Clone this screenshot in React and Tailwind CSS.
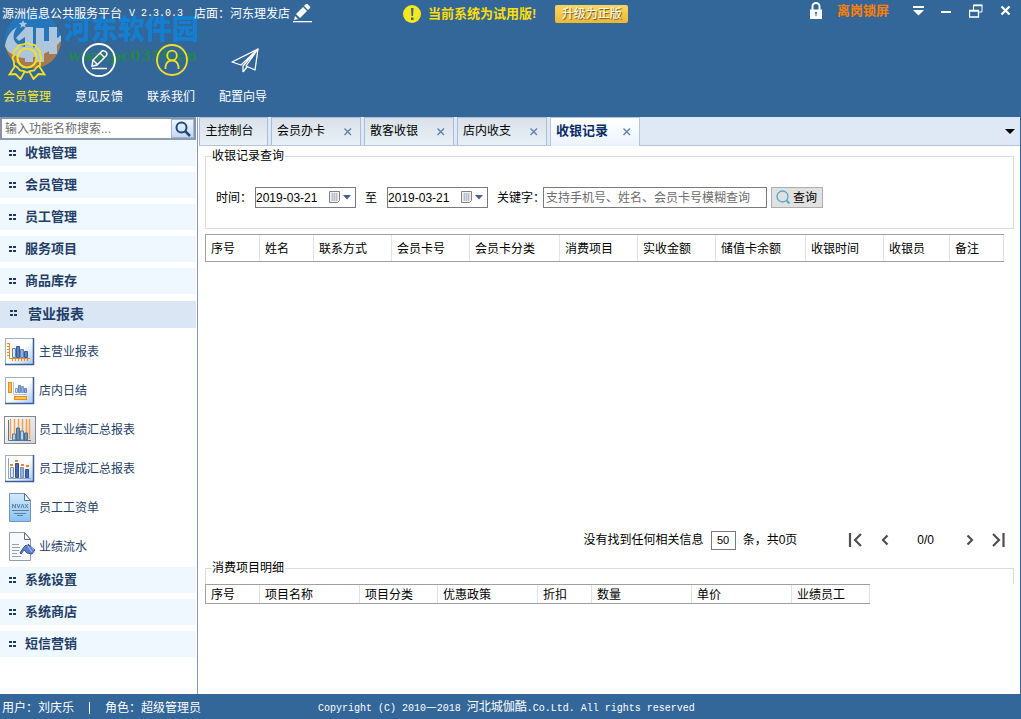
import React from "react";

const menuTop = ["收银管理", "会员管理", "员工管理", "服务项目", "商品库存"];
const menuBottom = ["系统设置", "系统商店", "短信营销"];

function Dots() {
  return (
    <svg width="8" height="7" viewBox="0 0 8 7" fill="#1f3a60" aria-hidden="true">
      <path d="M0 0h3v2H0zM4 0h3v2H4zM0 4h3v2H0zM4 4h3v2H4z" />
    </svg>
  );
}

function Frame({ children, dark }) {
  return (
    <svg width="32" height="30" viewBox="0 0 32 30" aria-hidden="true">
      <defs>
        <linearGradient id="tile" x1="0" y1="0" x2="1" y2="1">
          <stop offset="0.5" stopColor="#fff" />
          <stop offset="1" stopColor="#a4c6ff" />
        </linearGradient>
        <linearGradient id="tileGray" x1="0" y1="0" x2="1" y2="1">
          <stop offset="0" stopColor="#fff" />
          <stop offset="1" stopColor="#cfd4da" />
        </linearGradient>
        <linearGradient id="bar" x1="0" y1="0" x2="1" y2="0">
          <stop offset="0" stopColor="#e4eefb" />
          <stop offset="1" stopColor="#8ba6cf" />
        </linearGradient>
      </defs>
      {dark ? (
        <rect x="0.5" y="1.5" width="31" height="27" fill="url(#tileGray)" stroke="#85878c" />
      ) : (
        <>
          <rect x="1.5" y="1.5" width="28" height="26" fill="url(#tile)" stroke="#a3afc4" />
          <path d="M1 27.500H29.500V1" fill="none" stroke="#3d5c94" strokeWidth="1.500" />
        </>
      )}
      {children}
    </svg>
  );
}

function MainReport() {
  return (
    <Frame>
      <path d="M5.500 6V21.500H26" fill="none" stroke="#f28a1c" />
      <path d="M3 6.500h3M3 9.500h3M3 12.500h3M3 15.500h3M3 18.500h3M8.500 22v2M11.500 22v2M14.500 22v2M17.500 22v2M20.500 22v2M23.500 22v2" stroke="#f28a1c" />
      <path d="M8.500 20.500v-9h3v9zM16.500 20.500v-8h3v8z" fill="url(#bar)" stroke="#6480ae" />
      <path d="M12.500 20.500v-11h3v11zM20.500 20.500v-6h3v6z" fill="#5f80c4" stroke="#3b5a98" />
    </Frame>
  );
}
function DayReport() {
  return (
    <Frame>
      <rect x="4.500" y="6.500" width="3" height="10" fill="#ffc34d" stroke="#ee8a16" />
      <rect x="10.500" y="20.500" width="12" height="3" fill="#ffc34d" stroke="#ee8a16" />
      <path d="M9.500 6V18.500H23" fill="none" stroke="#b8c6dc" />
      <path d="M11.500 16.500v-4h2v4zM17.500 16.500v-6h2v6z" fill="url(#bar)" stroke="#7f9cc8" />
      <path d="M14.500 16.500v-7h2v7zM20.500 16.500v-4h2v4z" fill="#8fabdb" stroke="#6585bd" />
    </Frame>
  );
}
function StaffReport() {
  return (
    <Frame dark>
      <path d="M6.500 4v20M10.500 4v20M14.500 4v20M18.500 4v20M22.500 4v20M25.500 4v20" stroke="#f6a04c" strokeWidth="1.500" />
      <path d="M4.500 5V25.500H27" fill="none" stroke="#53759a" />
      <path d="M8.500 25v-6h3v6zM16.500 25v-9h3v9z" fill="#bcd2e4" stroke="#5b7d9e" />
      <path d="M12.500 25v-12h3v12zM20.500 25v-7h3v7z" fill="#6d8fad" stroke="#4b6e90" />
    </Frame>
  );
}
function BonusReport() {
  return (
    <Frame>
      <path d="M4.500 4V24.500H27" fill="none" stroke="#8da2c6" />
      <path d="M6.500 23.500v-10h3v10zM16.500 23.500v-10h3v10z" fill="url(#bar)" stroke="#7690bd" />
      <path d="M11.500 23.500v-14h3v14zM21.500 23.500v-8h3v8z" fill="#4668b0" stroke="#31508c" />
      <path d="M6 10h3v2H6zM11 6h3v2h-3zM17 10h3v2h-3zM22 11h3v2h-3z" fill="#f5841f" />
    </Frame>
  );
}
function PaySheet() {
  return (
    <svg width="32" height="30" viewBox="0 0 32 30" aria-hidden="true">
      <defs>
        <linearGradient id="sheet" x1="0" y1="0" x2="0" y2="1">
          <stop offset="0" stopColor="#d3ebfc" />
          <stop offset="1" stopColor="#86c2f4" />
        </linearGradient>
      </defs>
      <path d="M5.500 0.500h15l6 7v21h-21z" fill="url(#sheet)" stroke="#7795b8" />
      <path d="M20.500 0.500v7h6z" fill="#f5faff" stroke="#54708f" />
      <path d="M8.500 15v-4l3 4v-4M13 11l1.500 4 1.500-4M17 15l1.500-4 1.500 4M21 11l3 4M24 11l-3 4" stroke="#64819f" fill="none" />
      <path d="M8 17.500h17M10 20.500h12M13 22.500h6" stroke="#5f7f9f" />
    </svg>
  );
}
function FlowSheet() {
  return (
    <svg width="32" height="30" viewBox="0 0 32 30" aria-hidden="true">
      <path d="M5.500 0.500h15l6 7v21h-21z" fill="#f7f9fc" stroke="#8d9db5" />
      <path d="M20.500 0.500v7h6z" fill="#fff" stroke="#5c6f8c" />
      <path d="M8 12.500h7M8 15.500h8M8 18.500h7M8 21.500h5M8 24.500h9" stroke="#95a2b6" />
      <path d="M16 21q4-7 6-8l3 2-1-3 7 6-3 4-5-1-3-3-3 4z" fill="#5c80c8" stroke="#39589b" />
      <path d="M24 14l4 6M27 14l3 4" stroke="#b9ccf2" />
    </svg>
  );
}

const reports = [
  ["主营业报表", MainReport],
  ["店内日结", DayReport],
  ["员工业绩汇总报表", StaffReport],
  ["员工提成汇总报表", BonusReport],
  ["员工工资单", PaySheet],
  ["业绩流水", FlowSheet],
];

function Watermark() {
  return (
    <div className="pointer-events-none absolute top-3 left-1 flex select-none" aria-hidden="true">
      <svg width="60" height="58" viewBox="0 0 60 58">
        <circle cx="29" cy="28" r="28" fill="#2475ba" />
        <path d="M1 32C12 46 38 44 57 26C58 42 46 56 30 56C14 56 3 46 1 32z" fill="#a8794c" />
        <path d="M1 34C2 26 6 19 13 15C7 24 9 31 17 34C30 38 46 33 57 23v6C47 40 33 47 19 46C9 44 3 40 1 34z" fill="#aec5de" />
        <path d="M12 26L22 15h7v35h-8V25l-6 4z" fill="#aec5de" />
        <path d="M32 16h8v13h5V15h8v27h-8v-6h-5v14h-8z" fill="#aec5de" />
        <path d="M19 8l1.200 2.800 3 .2-2.300 2 .8 3-2.700-1.700-2.700 1.700.8-3-2.300-2 3-.2z" fill="#aec5de" />
      </svg>
      <div className="pt-1.5 whitespace-nowrap">
        <div className="text-[27px] leading-6 font-black text-[#147ed0]">河东软件园</div>
        <div className="pt-1 pl-1 font-['DejaVu_Serif',serif] text-[15px] leading-5 font-bold text-[#25854f]">www.pc0359.cn</div>
      </div>
    </div>
  );
}

function Medal() {
  return (
    <svg width="40" height="40" viewBox="0 0 40 40" fill="none" stroke="#f2df26" strokeWidth="1.800" aria-hidden="true">
      <path d="M20 3l4 1.500 4 .5 2 3.500 3 2.500 0 4 1.500 3-1.500 4 0 3-3.500 2.500-2.500 3-4 .5-3 1.500-3-1.500-4-.5-2.500-3-3.500-2.500 0-3-1.500-4 1.500-3 0-4 3-2.500 2-3.500 4-.5z" />
      <circle cx="20" cy="18" r="9.500" strokeWidth="2.200" />
      <path d="M8 26L2.500 34.500l6-.5 5 5 4.500-8M32 26l5.500 8.500-6-.5-5 5-4.500-8" />
    </svg>
  );
}
function Feedback() {
  return (
    <svg width="40" height="40" viewBox="0 0 40 40" fill="none" stroke="#fff" strokeWidth="1.800" aria-hidden="true">
      <circle cx="20" cy="20" r="16" />
      <path d="M13 26l1-6 9-9q2-1 4 1t0 4l-9 9zM14 20l4 4M21 13l4 4M13 28.500h15" strokeWidth="1.500" />
    </svg>
  );
}
function Contact() {
  return (
    <svg width="40" height="40" viewBox="0 0 40 40" fill="none" stroke="#f2df26" strokeWidth="1.800" aria-hidden="true">
      <circle cx="21" cy="20" r="15" />
      <circle cx="21" cy="15.500" r="4.800" />
      <path d="M14.500 29v-2.500q1-6 6.500-6t6.500 6V29" />
    </svg>
  );
}
function Plane() {
  return (
    <svg width="40" height="40" viewBox="0 0 40 40" fill="none" stroke="#fff" strokeWidth="1.300" strokeLinejoin="round" aria-hidden="true">
      <path d="M35 9L9 22l9 3zM35 9L32 30l-9-4zM35 9L20 26v6M20 32l4-5" />
    </svg>
  );
}

const tools = [
  ["会员管理", Medal, "text-[#fbe829]"],
  ["意见反馈", Feedback, "text-white"],
  ["联系我们", Contact, "text-white"],
  ["配置向导", Plane, "text-white"],
];

function Header() {
  return (
    <header className="relative h-[117px] shrink-0 bg-[#336699] text-white">
      <Watermark />
      <div className="relative flex h-7 items-center">
        <div className="flex w-[402px] shrink-0 items-center">
          <h1 className="pl-0.5">源洲信息公共服务平台</h1>
          <span className="pl-[7px] font-['Liberation_Mono','Noto_Sans_CJK_SC',monospace] text-[10px]">V 2.3.0.3</span>
          <span className="pl-[11px]">店面：河东理发店</span>
          <button aria-label="编辑店面" className="ml-[3px]">
            <svg width="20" height="20" viewBox="0 0 20 20" fill="#fff">
              <path d="M1 16l1-4 3 3zM3 10l7-7 4 4-7 7zM11 2l2-2q1-.5 2 .5l2 2q.5 1 0 1.500l-2 2z" />
              <path d="M0 17h19v1.300H0z" />
            </svg>
          </button>
        </div>
        <svg width="20" height="20" viewBox="0 0 20 20" aria-hidden="true">
          <circle cx="10" cy="10" r="9" fill="#f6e71f" />
          <path d="M9 4h2.500l-.5 8H9.500zM9 13.500h2.500V16H9z" fill="#36648c" />
        </svg>
        <strong className="pl-1.5 text-[13px] text-[#ffde00]">当前系统为试用版!</strong>
        <button className="ml-[19px] h-[18px] w-[73px] shrink-0 rounded-xs bg-linear-to-b from-[#fbd75e] to-[#ecb832] text-xs leading-[18px] text-white [text-shadow:1px_1px_1px_#5f4a10]">升级为正版</button>
        <div className="ml-auto flex h-5 items-center self-start pt-px pr-[9px]">
          <svg width="14" height="18" viewBox="0 0 14 18" aria-hidden="true">
            <path d="M3.500 8V4.500a3.500 3.500 0 017 0V8" fill="none" stroke="#fff" strokeWidth="2" />
            <path d="M1 7.500h12V17H1z" fill="#fff" />
            <path d="M6 10h2v1.500H7.500V14h-1v-2.500H6z" fill="#336699" />
          </svg>
          <button className="ml-3.5 text-[13px] font-bold text-[#ff8000]">离岗锁屏</button>
          <button aria-label="菜单" className="ml-6">
            <svg width="11" height="10" viewBox="0 0 11 10" fill="#fff"><path d="M0 0h11v2H0zM0 4h11L5.500 9.500z" /></svg>
          </button>
          <button aria-label="最小化" className="ml-[17px]">
            <svg width="11" height="10" viewBox="0 0 11 10"><path d="M0 5h10v2H0z" fill="#fff" /></svg>
          </button>
          <button aria-label="还原" className="ml-[17px]">
            <svg width="14" height="14" viewBox="0 0 14 14" fill="none" stroke="#fff">
              <path d="M4.500 6V1h8.500v7H9.500" /><path d="M4 1.500h9.500M.500 6.500h9v6.500H.500zM0 7h10" strokeWidth="1.300" />
            </svg>
          </button>
          <button aria-label="关闭" className="ml-[17px]">
            <svg width="12" height="12" viewBox="0 0 12 12" stroke="#fff" strokeWidth="2.200"><path d="M1.500 1.500l8 8M9.500 1.500l-8 8" /></svg>
          </button>
        </div>
      </div>
      <nav className="relative flex pt-3">
        {tools.map(([label, Icon, color]) => (
          <a key={label} href="#" className={"flex w-[72px] flex-col items-start " + color}>
            <span className="pl-[7px]"><Icon /></span>
            <span className="pt-[9px] pl-[3px]">{label}</span>
          </a>
        ))}
      </nav>
    </header>
  );
}

function MenuItem({ label }) {
  return (
    <a href="#" className="flex h-[26px] items-center gap-2 bg-[#eff7ff] pl-[9px] text-[13px] font-bold text-[#1f3f69]">
      <Dots />
      {label}
    </a>
  );
}

function Sidebar() {
  return (
    <aside className="flex w-[198px] shrink-0 flex-col border-r border-[#8798b5] bg-white">
      <div className="flex h-[23px] w-[196px] shrink-0 border-2 border-[#8494ab] border-b-[#8c9cb2] bg-white">
        <input aria-label="搜索功能" placeholder="输入功能名称搜索..." className="min-w-0 flex-1 pl-[3px] outline-none placeholder:text-[#6d6d6d]" />
        <button aria-label="搜索" className="flex w-[23px] items-center justify-center border border-[#9eb6d4] bg-linear-to-b from-[#eef5fd] to-[#c6d9ef]">
          <svg width="16" height="16" viewBox="0 0 16 16" fill="none" stroke="#1d4983">
            <circle cx="6.500" cy="6.500" r="5" strokeWidth="2" /><path d="M10 10l5 5" strokeWidth="2.500" />
          </svg>
        </button>
      </div>
      <nav className="w-[196px]">
        <div className="flex flex-col gap-1.5">{menuTop.map((m) => <MenuItem key={m} label={m} />)}</div>
        <a href="#" className="mt-[7px] flex h-[27px] items-center gap-2.5 bg-[#dbe6f4] pb-0.5 pl-2.5 text-[14px] font-bold text-[#1f3f69]">
          <Dots />
          营业报表
        </a>
        <div className="pt-1">
          {reports.map(([label, Icon]) => (
            <a key={label} href="#" className="flex h-[39px] items-center gap-[3px] pl-1 text-[#1f3f69]">
              <Icon />
              {label}
            </a>
          ))}
        </div>
        <div className="flex flex-col gap-1.5 pt-px">{menuBottom.map((m) => <MenuItem key={m} label={m} />)}</div>
      </nav>
    </aside>
  );
}

function CloseX() {
  return (
    <svg width="8" height="8" viewBox="0 0 8 8" stroke="#5b80ad" strokeWidth="1.400" aria-hidden="true"><path d="M.5 .5l6.500 6.500M7 .5L.5 7" /></svg>
  );
}

function Tabs() {
  return (
    <div className="flex h-[29px] shrink-0 items-stretch gap-[3px] border-b border-[#b3c6e0] bg-[#dfe9f6]">
      <button className="w-[69px] border border-b-0 border-[#a9bcd8] bg-linear-to-b from-[#dae1e8] to-[#e9f1f8] pr-2 pb-0.5 text-black">主控制台</button>
      {["会员办卡", "散客收银", "店内收支"].map((t) => (
        <div key={t} className="flex w-[90px] items-center justify-between border border-b-0 border-[#a9bcd8] bg-linear-to-b from-[#dae1e8] to-[#e9f1f8] pr-2 pl-[5px]">
          <button className="pb-0.5">{t}</button>
          <button aria-label={"关闭" + t}><CloseX /></button>
        </div>
      ))}
      <div className="-mb-px flex w-[90px] items-center justify-between border border-b-0 border-[#b3c6e0] bg-linear-to-b from-white to-[#ebf3fe] pr-2 pl-[5px]">
        <button className="pb-0.5 text-[13px] font-bold text-[#0b2c66]">收银记录</button>
        <button aria-label="关闭收银记录"><CloseX /></button>
      </div>
      <button aria-label="更多标签" className="ml-auto pr-[5px]">
        <svg width="10" height="5" viewBox="0 0 10 5"><path d="M0 0h10L5 5z" /></svg>
      </button>
    </div>
  );
}

function DateBox({ id, label }) {
  return (
    <div className="flex h-[21px] w-[101px] items-center border border-[#7a7a7a] bg-white">
      <input id={id} aria-label={label} defaultValue="2019-03-21" className="w-[73px] outline-none" />
      <button aria-label={"选择" + label} className="flex items-center gap-0.5">
        <svg width="12" height="13" viewBox="0 0 12 13">
          <path d="M.5 .5h10v9l-2 2h-8z" fill="#f2f1ef" stroke="#8a7f7c" />
          <path d="M2 3h7M2 5h7M2 7h7M2 9h7M3.500 2v8M5.500 2v8M7.500 2v8" stroke="#a9b3c6" strokeWidth=".7" />
        </svg>
        <svg width="8" height="5" viewBox="0 0 8 5"><path d="M0 0h8L4 4.500z" fill="#44618f" /></svg>
      </button>
    </div>
  );
}

function PageIcon({ d, label }) {
  return (
    <button aria-label={label}>
      <svg width="16" height="16" viewBox="0 0 16 16" fill="none" stroke="#505050" strokeWidth="2.200"><path d={d} /></svg>
    </button>
  );
}

const recordCols = [
  ["序号", "w-[54px]"], ["姓名", "w-[54px]"], ["联系方式", "w-[78px]"], ["会员卡号", "w-[78px]"],
  ["会员卡分类", "w-[90px]"], ["消费项目", "w-[78px]"], ["实收金额", "w-[78px]"], ["储值卡余额", "w-[90px]"],
  ["收银时间", "w-[78px]"], ["收银员", "w-[66px]"], ["备注", "w-[54px]"],
];
const detailCols = [
  ["序号", "w-[54px]"], ["项目名称", "w-[100px]"], ["项目分类", "w-[78px]"], ["优惠政策", "w-[100px]"],
  ["折扣", "w-[54px]"], ["数量", "w-[100px]"], ["单价", "w-[100px]"], ["业绩员工", "w-[78px]"],
];

function HeadTable({ cols, row, label }) {
  return (
    <table aria-label={label} className="table-fixed border-separate border-spacing-0 self-start border border-r-0 border-[#a0a0a0]">
      <thead>
        <tr className={row}>
          {cols.map(([c, w]) => (
            <th key={c} scope="col" className={"border-r border-[#e2e2e2] p-0 pt-px pl-[5px] text-left font-normal whitespace-nowrap " + w}>{c}</th>
          ))}
        </tr>
      </thead>
    </table>
  );
}

function Content() {
  return (
    <main className="flex min-w-0 flex-1 flex-col border-r border-[#336699] bg-white pl-px">
      <Tabs />
      <div className="flex flex-1 flex-col pt-0.5 pr-1.5 pl-1.5">
        <fieldset className="h-[81px] border border-[#dcdcdc] px-1.5">
          <legend className="pr-px leading-4">收银记录查询</legend>
          <form className="flex items-center pt-[23px] pl-1">
            <label htmlFor="from">时间：</label>
            <span className="ml-[3px]"><DateBox id="from" label="开始日期" /></span>
            <label htmlFor="to" className="mr-2.5 ml-[9px]">至</label>
            <DateBox id="to" label="结束日期" />
            <label htmlFor="keyword" className="ml-[9px] w-[46px] whitespace-nowrap">关键字：</label>
            <input id="keyword" placeholder="支持手机号、姓名、会员卡号模糊查询" className="h-[21px] w-[224px] border border-[#7a7a7a] pl-0.5 outline-none placeholder:text-[#6d6d6d]" />
            <button type="button" className="ml-1 flex h-[21px] w-[52px] items-center gap-0.5 border border-[#adadad] bg-[#e1e1e1] pl-1">
              <svg width="15" height="15" viewBox="0 0 15 15" fill="none" stroke="#4ea9d2">
                <circle cx="6.500" cy="6.500" r="5.500" strokeWidth="1.300" /><path d="M10.500 10.500l3 3" strokeWidth="1.800" />
              </svg>
              查询
            </button>
          </form>
        </fieldset>
        <div className="mt-[5px] flex flex-1 flex-col">
          <HeadTable cols={recordCols} row="h-[26px]" label="收银记录" />
        </div>
        <div className="flex h-10 items-center justify-end pr-2">
          <span>没有找到任何相关信息</span>
          <input aria-label="每页条数" defaultValue="50" className="mx-[7px] h-[19px] w-[25px] border border-[#7a7a7a] text-center text-[11px] outline-none" />
          <span>条，共0页</span>
          <div className="ml-[50px] flex items-center">
            <PageIcon label="首页" d="M3 1v14M14 2L8 8l6 6" />
            <span className="ml-3.5 flex"><PageIcon label="上一页" d="M10.500 3.500L6 8l4.500 4.500" /></span>
            <span className="mr-7 ml-6">0/0</span>
            <span className="mr-3 flex"><PageIcon label="下一页" d="M5.500 3.500L10 8l-4.500 4.500" /></span>
            <PageIcon label="末页" d="M13.500 1v14M3 2l6 6-6 6" />
          </div>
        </div>
        <fieldset className="h-6 border border-b-0 border-[#dcdcdc] px-1.5">
          <legend className="pr-px leading-4">消费项目明细</legend>
        </fieldset>
        <div className="h-[110px]">
          <HeadTable cols={detailCols} row="h-[18px]" label="消费项目明细" />
        </div>
      </div>
    </main>
  );
}

export default function App() {
  return (
    <div className="flex min-h-screen flex-col bg-white font-['Liberation_Sans','Noto_Sans_CJK_SC',sans-serif] text-xs leading-4 text-black">
      <Header />
      <div className="flex flex-1">
        <Sidebar />
        <Content />
      </div>
      <footer className="flex h-[25px] shrink-0 items-center bg-[#336699] pt-0.5 whitespace-nowrap text-white">
        <div className="flex w-[318px] shrink-0 items-center pl-0.5">
          <span>用户：刘庆乐</span>
          <span className="mx-[15px] h-3 w-px bg-white" />
          <span>角色：超级管理员</span>
        </div>
        <small className="font-['Liberation_Mono','Noto_Sans_CJK_SC',monospace] text-[10px]">
          Copyright (C) 2010<span className="font-['Noto_Sans_CJK_SC',sans-serif] text-xs">—</span>2018 <span className="text-xs">河北城伽酷</span>.Co.Ltd. All rights reserved
        </small>
      </footer>
    </div>
  );
}
